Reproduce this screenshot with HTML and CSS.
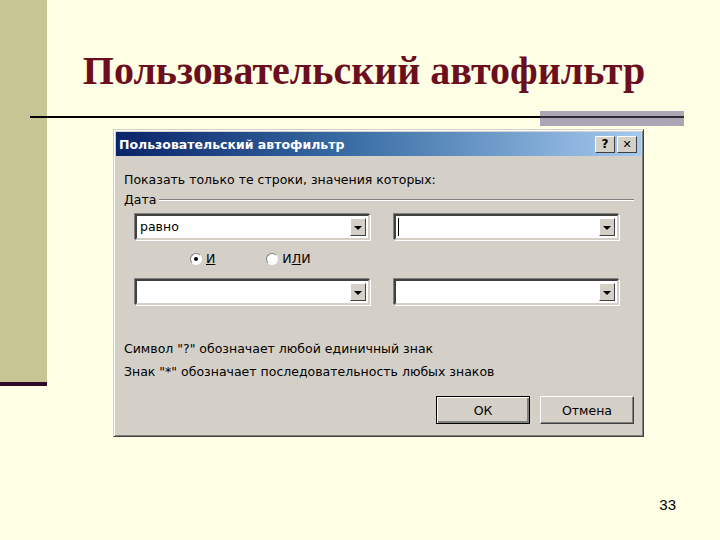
FILE: index.html
```html
<!DOCTYPE html>
<html lang="ru">
<head>
<meta charset="UTF-8">
<title>Пользовательский автофильтр</title>
<link rel="stylesheet" href="styles.css">
</head>
<body>

<div class="slide">
    <div class="sidebar"></div>

    <h1 class="title">Пользовательский автофильтр</h1>

    <div class="rule"><div class="rule-end"></div></div>

    <div class="dialog">
        <div class="caption">
            <span class="caption-text">Пользовательский автофильтр</span>
            <span class="cap-btn">?</span>
            <span class="cap-btn close">&#x2715;</span>
        </div>

        <div class="dlg-body">
            <p class="line first">Показать только те строки, значения которых:</p>
            <div class="group"><span>Дата</span><div class="groove"></div></div>

            <div class="combo-row">
                <div class="combo wide"><span class="value">равно</span><span class="drop"></span></div>
                <div class="combo"><span class="value caret"></span><span class="drop"></span></div>
            </div>

            <div class="radios">
                <label class="radio"><span class="dot checked"></span><span><u>И</u></span></label>
                <label class="radio"><span class="dot"></span><span>И<u>Л</u>И</span></label>
            </div>

            <div class="combo-row second">
                <div class="combo wide"><span class="value"></span><span class="drop"></span></div>
                <div class="combo"><span class="value"></span><span class="drop"></span></div>
            </div>

            <p class="line hint">Символ "?" обозначает любой единичный знак</p>
            <p class="line">Знак "*" обозначает последовательность любых знаков</p>

            <div class="buttons">
                <button class="btn default">ОК</button>
                <button class="btn">Отмена</button>
            </div>
        </div>
    </div>

    <div class="page-num">33</div>
</div>

</body>
</html>
```

FILE: styles.css
```css
body {
    margin: 0;
    background-color: #ffffe5;
    font-family: 'Liberation Sans', Arial, sans-serif;
}
.slide {
    width: 720px;
    height: 540px;
    display: grid;
    grid-template-columns: 47px 1fr;
    grid-template-rows: auto auto auto 1fr;
    overflow: hidden;
}
.sidebar {
    grid-column: 1;
    grid-row: 1 / 4;
    align-self: start;
    height: 382px;
    background-color: #c6c695;
    border-bottom: 4px solid #2d0a28;
}
.title {
    grid-column: 2;
    grid-row: 1;
    margin: 0;
    padding-top: 48px;
    text-align: center;
    width: 634px;
    font-family: 'Liberation Serif', 'Times New Roman', serif;
    font-weight: bold;
    font-size: 40px;
    line-height: 46px;
    color: #6b0f20;
}
.rule {
    grid-column: 1 / 3;
    grid-row: 2;
    margin: 17px 0 0 30px;
    width: 654px;
    height: 15px;
    display: flex;
    background: linear-gradient(#000, #000) no-repeat 0 5px / 100% 2px;
}
.rule-end {
    margin-left: auto;
    width: 144px;
    height: 15px;
    background: linear-gradient(#2a2a30, #2a2a30) no-repeat 0 5px / 100% 2px, #aaa6b4;
}

/* dialog */
.dialog {
    grid-column: 2;
    grid-row: 3;
    margin: 3px 0 0 66px;
    width: 531px;
    height: 308px;
    box-sizing: border-box;
    background-color: #d4d0c8;
    border: 1px solid;
    border-color: #d4d0c8 #404040 #404040 #d4d0c8;
    box-shadow: inset 1px 1px #fff, inset -1px -1px #808080;
    padding: 2px;
    display: flex;
    flex-direction: column;
    font-family: 'DejaVu Sans', Tahoma, sans-serif;
    font-size: 12.5px;
    color: #000;
}
.caption {
    height: 24px;
    display: flex;
    align-items: center;
    padding: 0 4px 0 3px;
    background: linear-gradient(to right, #0a246a, #3a6ea5 45%, #a6caf0);
    color: #fff;
}
.caption-text {
    font-weight: bold;
    font-size: 12.5px;
    flex: 1;
}
.cap-btn {
    width: 20px;
    height: 17px;
    margin-left: 3px;
    box-sizing: border-box;
    background-color: #d4d0c8;
    border: 1px solid;
    border-color: #fff #404040 #404040 #fff;
    color: #000;
    font-weight: bold;
    font-size: 12px;
    line-height: 15px;
    text-align: center;
}
.cap-btn.close {
    margin-left: 2px;
    font-size: 11px;
}
.dlg-body {
    padding: 0 7px 0 8px;
    display: flex;
    flex-direction: column;
}
.line {
    margin: 0;
    line-height: 16px;
}
.line.first {
    margin-top: 16px;
}
.group {
    display: flex;
    align-items: center;
    gap: 3px;
    margin-top: 4px;
    line-height: 16px;
}
.groove {
    flex: 1;
    height: 0;
    border-top: 1px solid #808080;
    border-bottom: 1px solid #fff;
}
.combo-row {
    display: flex;
    gap: 24px;
    margin: 6px 0 0 11px;
}
.combo-row.second {
    margin-top: 12px;
}
.combo {
    width: 225px;
    height: 26px;
    box-sizing: border-box;
    display: flex;
    background-color: #fff;
    border: 2px solid;
    border-color: #404040 #d4d0c8 #d4d0c8 #404040;
    box-shadow: 1px 1px #fff, -1px -1px #808080;
    padding: 2px 2px 2px 0;
}
.combo.wide {
    width: 235px;
}
.value {
    flex: 1;
    padding-left: 3px;
    line-height: 18px;
}
.value.caret {
    border-left: 1px solid #000;
    margin-left: 2px;
}
.drop {
    width: 16px;
    box-sizing: border-box;
    background-color: #d4d0c8;
    border: 1px solid;
    border-color: #fff #404040 #404040 #fff;
    position: relative;
}
.drop::after {
    content: '';
    position: absolute;
    left: 3px;
    top: 7px;
    border: 4px solid transparent;
    border-top: 4px solid #000;
    border-bottom: 0;
}
.radios {
    display: flex;
    gap: 51px;
    margin: 11px 0 0 66px;
    line-height: 16px;
}
.radio {
    display: flex;
    align-items: center;
    gap: 4px;
}
.dot {
    width: 12px;
    height: 12px;
    box-sizing: border-box;
    border-radius: 50%;
    background-color: #fff;
    border: 1px solid;
    border-color: #808080 #fff #fff #808080;
    position: relative;
}
.dot.checked::after {
    content: '';
    position: absolute;
    left: 3px;
    top: 3px;
    width: 4px;
    height: 4px;
    border-radius: 50%;
    background-color: #000;
}
.line.hint {
    margin-top: 36px;
}
.hint + .line {
    margin-top: 7px;
}
.buttons {
    display: flex;
    justify-content: flex-end;
    gap: 10px;
    margin-top: 16px;
}
.btn {
    width: 94px;
    height: 28px;
    padding: 0;
    font-family: 'DejaVu Sans', Tahoma, sans-serif;
    font-size: 12.5px;
    color: #000;
    background-color: #d4d0c8;
    border: 1px solid;
    border-color: #fff #404040 #404040 #fff;
    box-shadow: inset -1px -1px #808080;
}
.btn.default {
    border: 1px solid #000;
    box-shadow: inset 1px 1px #fff, inset -2px -2px #808080;
}
.page-num {
    grid-column: 2;
    grid-row: 4;
    justify-self: end;
    margin: 59px 44px 0 0;
    font-size: 15px;
    line-height: 18px;
    color: #000;
}
```
